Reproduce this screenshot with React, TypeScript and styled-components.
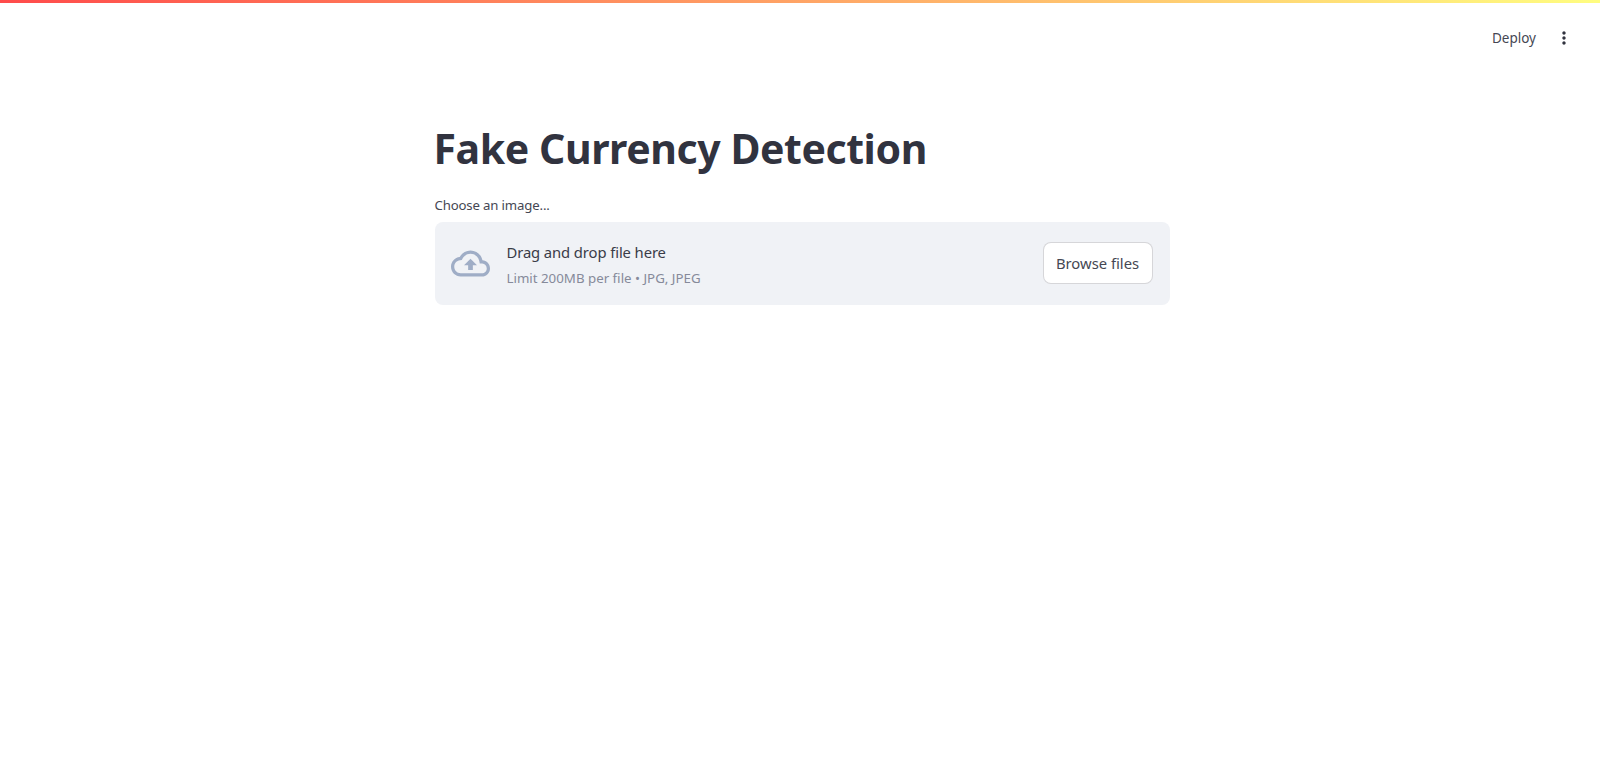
import React from 'react';
import styled, {createGlobalStyle} from 'styled-components';

const GlobalStyle = createGlobalStyle`
  html, body {
    margin: 0;
    padding: 0;
    background: #fff;
    font-family: "Noto Sans", "Open Sans", sans-serif;
    color: #31333f;
  }
`;

const Page = styled.div`
  height: 771px;
  overflow: hidden;
`;

const Decoration = styled.div`
  height: 3px;
  background: linear-gradient(90deg, #ff4b4b, #fffd80);
`;

const Toolbar = styled.header`
  display: flex;
  justify-content: flex-end;
  align-items: center;
  height: 70px;
  padding-right: 26px;
  gap: 18px;
`;

const DeployButton = styled.button`
  border: none;
  background: transparent;
  padding: 0;
  font: inherit;
  font-size: 13.5px;
  color: #454753;
`;

const MenuIcon = styled.svg`
  display: block;
  width: 20px;
  height: 20px;
  fill: #31333f;
`;

const MainColumn = styled.main`
  width: 735px;
  margin: 0 0 0 434.5px;
  padding-top: 50px;
`;

const Title = styled.h1`
  margin: 0 0 0 -1px;
  font-size: 41px;
  line-height: 50px;
  font-weight: 700;
  letter-spacing: -0.42px;
  color: #31333f;
`;

const Label = styled.label`
  display: block;
  margin-top: 22px;
  font-size: 13.2px;
  line-height: 20px;
  letter-spacing: -0.15px;
  color: #454753;
`;

const Dropzone = styled.section`
  display: flex;
  align-items: center;
  height: 83px;
  margin-top: 7px;
  padding: 0 17px 0 16px;
  box-sizing: border-box;
  background: #f0f2f6;
  border-radius: 8px;
`;

const CloudIcon = styled.svg`
  display: block;
  width: 39px;
  height: 39px;
  fill: #9fadc6;
  flex: none;
  margin-right: 17px;
`;

const DropText = styled.div`
  flex: 1;
  display: flex;
  flex-direction: column;
`;

const DropTitle = styled.span`
  font-size: 14.8px;
  line-height: 24px;
  letter-spacing: -0.1px;
  color: #3a3c48;
`;

const DropHint = styled.small`
  font-size: 13.3px;
  line-height: 20px;
  margin-top: 4px;
  color: #868a9a;
`;

const BrowseButton = styled.button`
  width: 110px;
  height: 42px;
  margin-bottom: 2px;
  padding: 0;
  font: inherit;
  font-size: 14.8px;
  color: #454753;
  background: #fff;
  border: 1px solid rgba(49, 51, 63, 0.2);
  border-radius: 8px;
`;

export default function App() {
  return (
    <Page>
      <GlobalStyle />
      <Decoration />
      <Toolbar>
        <DeployButton type="button">Deploy</DeployButton>
        <MenuIcon viewBox="0 0 24 24">
          <path d="M12 8c1.1 0 2-.9 2-2s-.9-2-2-2-2 .9-2 2 .9 2 2 2zm0 2c-1.1 0-2 .9-2 2s.9 2 2 2 2-.9 2-2-.9-2-2-2zm0 6c-1.1 0-2 .9-2 2s.9 2 2 2 2-.9 2-2-.9-2-2-2z" />
        </MenuIcon>
      </Toolbar>
      <MainColumn>
        <Title>Fake Currency Detection</Title>
        <Label>Choose an image...</Label>
        <Dropzone>
          <CloudIcon viewBox="0 0 24 24">
            <path d="M19.35 10.04C18.67 6.59 15.64 4 12 4 9.11 4 6.6 5.64 5.35 8.04 2.34 8.36 0 10.91 0 14c0 3.31 2.69 6 6 6h13c2.76 0 5-2.24 5-5 0-2.64-2.05-4.78-4.65-4.96zM19 18H6c-2.21 0-4-1.79-4-4 0-2.05 1.53-3.76 3.56-3.97l1.07-.11.5-.95C8.08 7.14 9.94 6 12 6c2.62 0 4.88 1.86 5.39 4.43l.3 1.5 1.53.11c1.56.1 2.78 1.41 2.78 2.96 0 1.65-1.35 3-3 3zM8 13h2.55v3h2.9v-3H16l-4-4z" />
          </CloudIcon>
          <DropText>
            <DropTitle>Drag and drop file here</DropTitle>
            <DropHint>Limit 200MB per file • JPG, JPEG</DropHint>
          </DropText>
          <BrowseButton type="button">Browse files</BrowseButton>
        </Dropzone>
      </MainColumn>
    </Page>
  );
}
